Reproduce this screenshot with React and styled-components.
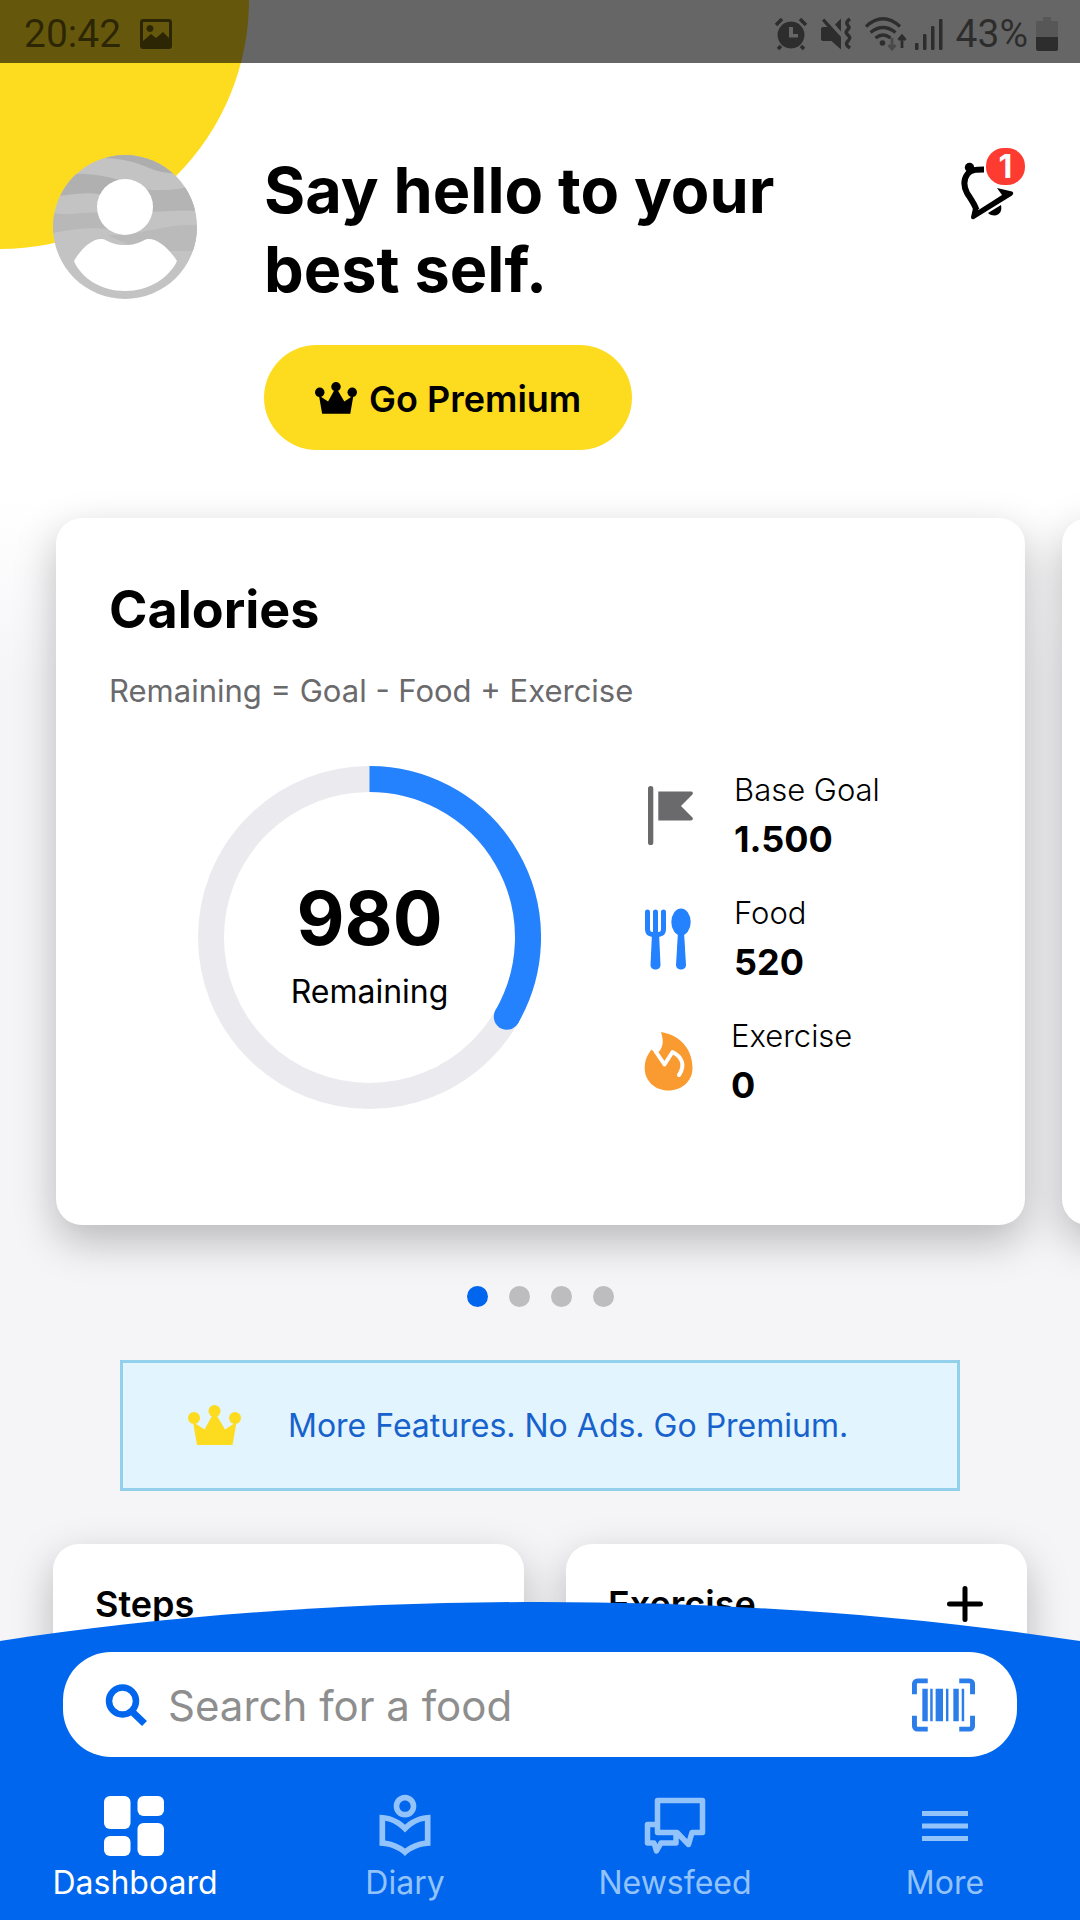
import React from "react";
import styled, { createGlobalStyle } from "styled-components";
import { MdOutlineLocalLibrary } from "react-icons/md";

const GlobalStyle = createGlobalStyle`
  *, *::before, *::after { box-sizing: border-box; }
  body { margin: 0; background: #f5f5f8; font-family: Inter, "Liberation Sans", sans-serif; color: #000; }
  h1, h2, p, ul, dl, dd { margin: 0; padding: 0; }
  button, input { font: inherit; color: inherit; border: 0; background: none; padding: 0; }
  button { cursor: pointer; }
  svg { display: block; flex: none; }
`;

const Page = styled.div`
  position: relative;
  min-height: 100vh;
  overflow: hidden;
  background: linear-gradient(#fff 0, #fff 500px, #f5f5f8 680px);
`;

const Sun = styled.div`
  position: absolute;
  top: -249px;
  left: -249px;
  width: 498px;
  height: 498px;
  border-radius: 50%;
  background: #fddb1f;
`;

const StatusBar = styled.div`
  position: relative;
  display: flex;
  align-items: center;
  height: 63px;
  padding: 4px 22px 0 24px;
  background: rgba(0, 0, 0, 0.6);
  color: rgba(0, 0, 0, 0.56);
  font: 400 39px/48px Roboto, sans-serif;
`;

const Clock = styled.time`
  margin-right: 19px;
`;

const StatusIcons = styled.div`
  display: flex;
  align-items: center;
  gap: 8px;
  margin-left: auto;
`;

const GlyphGroup = styled.div`
  display: flex;
  align-items: center;
  gap: 12px;
`;

const Header = styled.header`
  position: relative;
  display: flex;
  align-items: flex-start;
  padding: 85px 52px 0 53px;
`;

const Avatar = styled.button`
  margin-top: 7px;
  width: 144px;
  height: 144px;
  flex: none;
`;

const Greeting = styled.div`
  flex: 1;
  margin-left: 67px;
  padding-top: 3px;
`;

const Title = styled.h1`
  max-width: 560px;
  font-size: 63px;
  line-height: 79px;
  font-weight: 700;
`;

const PremiumButton = styled.button`
  display: flex;
  align-items: center;
  justify-content: center;
  gap: 12px;
  height: 105px;
  margin-top: 36px;
  padding: 2px 51px 0;
  border-radius: 53px;
  background: #fddb1f;
  font-size: 36px;
  line-height: 44px;
  font-weight: 600;
`;

const BellButton = styled.button`
  position: relative;
  display: flex;
  width: 70px;
  height: 74px;
  padding: 12px 0 0;
`;

const Badge = styled.span`
  position: absolute;
  top: 0;
  right: 3px;
  width: 39px;
  height: 37px;
  border-radius: 18px;
  background: #fe3b30;
  color: #fff;
  font-size: 32px;
  line-height: 38px;
  font-weight: 700;
  text-align: center;
`;

const Carousel = styled.section`
  position: relative;
  display: flex;
  gap: 37px;
  margin-top: 68px;
  padding: 0 0 0 56px;
`;

const Card = styled.article`
  background: #fff;
  border-radius: 26px;
  box-shadow: 0 16px 42px rgba(0, 0, 0, 0.25);
`;

const CaloriesCard = styled(Card)`
  flex: 0 0 calc(100% - 55px);
  height: 707px;
  padding: 60px 53px;
`;

const NextCard = styled(Card)`
  flex: 0 0 100%;
`;

const CardTitle = styled.h2`
  font-size: 52px;
  line-height: 64px;
  font-weight: 700;
`;

const Formula = styled.p`
  margin-top: 29px;
  color: #6a6a6d;
  font-size: 31px;
  line-height: 40px;
  font-weight: 400;
`;

const Summary = styled.div`
  display: flex;
  margin-top: 55px;
  padding-left: 89px;
`;

const Ring = styled.div`
  position: relative;
  display: flex;
  flex-direction: column;
  align-items: center;
  justify-content: center;
  width: 343px;
  height: 343px;
  padding-top: 12px;
`;

const RingArt = styled.svg`
  position: absolute;
  inset: 0;
`;

const RingValue = styled.strong`
  font-size: 74px;
  line-height: 84px;
  font-weight: 700;
`;

const RingLabel = styled.span`
  font-size: 32px;
  line-height: 40px;
  margin-top: 12px;
`;

const Legend = styled.dl`
  display: flex;
  flex-direction: column;
  gap: 24px;
  margin-left: 103px;
`;

const LegendRow = styled.div`
  display: grid;
  grid-template-columns: auto 1fr;
  column-gap: 36px;
  align-items: center;
`;

const LegendIcon = styled.span`
  grid-row: 1 / 3;
`;

const LegendLabel = styled.dt`
  font-size: 31px;
  line-height: 47px;
  font-weight: 300;
`;

const LegendValue = styled.dd`
  font-size: 36px;
  line-height: 52px;
  font-weight: 700;
`;

const Dots = styled.div`
  position: relative;
  display: flex;
  justify-content: center;
  gap: 21px;
  margin-top: 61px;
`;

const Dot = styled.button`
  width: 21px;
  height: 21px;
  border-radius: 50%;
  background: ${(p) => (p.$active ? "#0066ee" : "#bdbdbf")};
`;

const Banner = styled.a`
  position: relative;
  display: flex;
  align-items: center;
  gap: 47px;
  height: 131px;
  margin: 53px 120px 0;
  padding: 0 65px;
  border: 3px solid #92d0ec;
  background: #e2f4fe;
  color: #1762cc;
  font-size: 32px;
  line-height: 40px;
  font-weight: 400;
  text-decoration: none;
`;

const Tiles = styled.section`
  position: relative;
  display: grid;
  grid-template-columns: 471fr 461fr;
  gap: 42px;
  margin-top: 53px;
  padding: 0 53px 40px;
`;

const Tile = styled(Card)`
  display: flex;
  align-items: flex-start;
  justify-content: space-between;
  min-height: 320px;
  padding: 38px 44px 38px 42px;
`;

const TileTitle = styled.h2`
  font-size: 36px;
  line-height: 44px;
  font-weight: 600;
`;

const PlusButton = styled.button`
  padding-top: 4px;
`;

const BottomBar = styled.footer`
  position: fixed;
  left: 0;
  right: 0;
  bottom: 0;
`;

const Hill = styled.svg`
  width: 100%;
  height: 40px;
`;

const BottomBody = styled.div`
  background: #0066ee;
  padding: 10px 0 17px;
`;

const Search = styled.form`
  display: flex;
  align-items: center;
  gap: 21px;
  height: 105px;
  margin: 0 63px;
  padding: 0 42px;
  border-radius: 48px;
  background: #fff;
`;

const SearchInput = styled.input`
  flex: 1;
  min-width: 0;
  height: 60px;
  padding-top: 2px;
  font-size: 42px;
  font-weight: 400;
  outline: 0;
  &::placeholder { color: #8e8e8e; opacity: 1; }
`;

const Nav = styled.nav`
  display: grid;
  grid-template-columns: repeat(4, 1fr);
  margin-top: 35px;
`;

const NavLink = styled.a`
  display: flex;
  flex-direction: column;
  align-items: center;
  color: ${(p) => (p.$active ? "#fff" : "#93c3fb")};
  font-size: 32px;
  line-height: 40px;
  font-weight: 400;
  text-decoration: none;
`;

const NavIcon = styled.span`
  display: flex;
  align-items: center;
  justify-content: center;
  height: 68px;
  margin-bottom: 3px;
`;

function Crown({ width, color }) {
  return (
    <svg width={width} viewBox="0 0 53 42" fill={color} aria-hidden="true">
      <circle cx="6" cy="13" r="6" />
      <circle cx="26.500" cy="6" r="6" />
      <circle cx="47" cy="13" r="6" />
      <path d="M5 17l4 23h35.500l4-23-11.500 7.500L28.500 10h-4L16.500 24.500z" />
    </svg>
  );
}

function Alarm() {
  return (
    <svg width="34" height="34" viewBox="0 0 34 34" fill="none" stroke="currentColor" aria-hidden="true">
      <path fillRule="evenodd" fill="currentColor" stroke="none" d="M17 4.500a13.500 13.500 0 1 0 .010 0zM15 10h4v7h5v3.500h-9z" />
      <path d="M2 8l6-6M32 8l-6-6M7 29l-3 3M27 29l3 3" strokeWidth="3.500" />
    </svg>
  );
}

function Muted() {
  return (
    <svg width="33" height="34" viewBox="0 0 33 34" fill="none" stroke="currentColor" aria-hidden="true">
      <path fill="currentColor" stroke="none" d="M4.300 1.500L21 20v12.500l-9.500-8.500H3a2 2 0 0 1-2-2V12a2 2 0 0 1 2-2h4.500L2 3.800zM21 1.500v13l-6-7z" />
      <path d="M30 2c-6 4-2 6-1 8s-5 4-2 7 4 4 1 7-1 5 2 7" strokeWidth="3.500" />
    </svg>
  );
}

function Wifi() {
  return (
    <svg width="42" height="34" viewBox="0 0 42 34" fill="none" stroke="currentColor" aria-hidden="true">
      <path d="M1 9.500Q18-6 35 9.500M5.500 15.500q12.500-10 25 0M10.500 21q7.500-6 15 0" strokeWidth="3.300" />
      <circle cx="17.500" cy="26" r="2.800" fill="currentColor" stroke="none" />
      <path d="M37 31V20M33.500 23l3.500-4 3.500 4" strokeWidth="2.800" />
      <path d="M27 21v10M23.500 28l3.500 4 3.500-4" strokeWidth="2.800" opacity="0.500" />
    </svg>
  );
}

function Signal() {
  return (
    <svg width="33" height="32" viewBox="0 0 33 32" fill="currentColor" aria-hidden="true">
      <rect x="0" y="25" width="3.500" height="7" rx="1" />
      <rect x="8" y="16" width="3.500" height="16" rx="1" />
      <rect x="16" y="8" width="3.500" height="24" rx="1" />
      <rect x="24" y="1" width="3.500" height="31" rx="1" />
    </svg>
  );
}

function Battery() {
  return (
    <svg width="22" height="34" viewBox="0 0 22 34" fill="currentColor" aria-hidden="true">
      <path opacity="0.250" d="M7 0h8v4h7v16H0V4h7z" />
      <path d="M0 20h22v12a2 2 0 0 1-2 2H2a2 2 0 0 1-2-2z" />
    </svg>
  );
}

function Picture() {
  return (
    <svg width="32" height="30" viewBox="0 0 32 30" aria-hidden="true">
      <path
        fill="currentColor"
        fillRule="evenodd"
        d="M3 0h26a3 3 0 0 1 3 3v24a3 3 0 0 1-3 3H3a3 3 0 0 1-3-3V3a3 3 0 0 1 3-3zM3 3v19l8-7 5 4 7-6 6 6V3zM10 6a3.500 3.500 0 1 1-.010 0z"
      />
    </svg>
  );
}

function AvatarArt() {
  return (
    <svg width="144" height="144" viewBox="0 0 144 144" aria-hidden="true">
      <defs>
        <clipPath id="disc"><circle cx="72" cy="72" r="72" /></clipPath>
      </defs>
      <g clipPath="url(#disc)">
        <path fill="#c3c3c3" d="M0 0h144v144H0z" />
        <path fill="#adadad" d="M48 0h96v18c-22 2-38 0-50-6C80 6 64 3 48 3z" />
        <path fill="#b0b0b0" d="M0 20c30-3 50 0 66 5L50 40C34 36 16 40 0 42z" />
        <path fill="#b4b4b4" d="M90 34c20 3 38 0 54-4v26c-20-2-34 2-54 0z" />
        <path fill="#b8b8b8" d="M0 58c20 3 30-2 50 0l6 16C34 72 20 74 0 78z" />
        <path fill="#bababa" d="M54 80c30 2 60-12 90-10v26H90z" />
      </g>
      <circle cx="72" cy="52" r="28" fill="#fff" />
      <path
        fill="#fff"
        d="M21 106C29 92 40 84 48 84c7 0 8 6 24 6s17-6 24-6c8 0 19 8 28 22-8 17-28 30-52 30s-44-13-51-30z"
      />
    </svg>
  );
}

function Bell() {
  return (
    <svg width="60" height="62" viewBox="0 0 60 62" aria-hidden="true">
      <circle cx="11.500" cy="7.500" r="4.700" />
      <path fill="none" stroke="#000" strokeWidth="6" d="M26 9.500C18 9.500 13 9.500 9.500 14 5 20 6 27 9 33c3 5 7 10 9.500 17" />
      <path d="M13 57l3-13 4.500 6L44 35l-5-7 15 3.500q2.500 1.500 0 4L16 59q-3 1-3-2z" />
      <path d="M30 53l13-8c1 5-.500 8-3 9.500s-6.500 1.500-10-1.500z" />
    </svg>
  );
}

function Flag() {
  return (
    <svg width="54" height="62" viewBox="0 0 54 62" fill="#6a6a6d" aria-hidden="true">
      <rect x="4" y="1" width="5.300" height="59" rx="2.600" />
      <path d="M14.300 6.500H47c2 0 2.500 2 1.200 3.200L37 21l11.200 11.300c1.300 1.200.800 3.200-1.200 3.200H14.300z" />
    </svg>
  );
}

function Cutlery() {
  return (
    <svg width="54" height="62" viewBox="0 0 54 62" fill="#2582fe" aria-hidden="true">
      <path
        fill="none"
        stroke="#2582fe"
        strokeWidth="5"
        strokeLinecap="round"
        d="M3.500 4v17c0 5 3 5.500 8 5.500s8-.500 8-5.500V4M11.500 4v22"
      />
      <path d="M8 25h7l1.500 32c0 6-10 6-10 0z" />
      <ellipse cx="37" cy="14" rx="9.700" ry="13.500" />
      <path d="M34 24h6l2 33c0 6-10 6-10 0z" />
    </svg>
  );
}

function Flame() {
  return (
    <svg width="51" height="62" viewBox="0 0 51 62" aria-hidden="true">
      <path
        fill="#f99b31"
        d="M17 1C36 4 48.500 18 48.500 37c0 13-10.500 22.500-24 22.500S.700 50 .700 37c0-7 2.300-13 7-18.500l4.300 5 4-4C20 13 19 8 17 1z"
      />
      <path d="M12 21l8.500 12.500L28.500 21c8 4 14 12 6.500 23" fill="none" stroke="#fff" strokeWidth="4" strokeLinecap="round" strokeLinejoin="round" />
    </svg>
  );
}

function Plus() {
  return (
    <svg width="36" height="36" viewBox="0 0 36 36" stroke="#000" strokeWidth="5" strokeLinecap="round" aria-hidden="true">
      <path d="M18 2.500v31M2.500 18h31" />
    </svg>
  );
}

function Magnifier() {
  return (
    <svg width="42" height="42" viewBox="0 0 42 42" fill="none" stroke="#0066ee" aria-hidden="true">
      <circle cx="17.500" cy="17" r="13.500" strokeWidth="6.500" />
      <path d="M27.500 28l12 11.500" strokeWidth="7" />
    </svg>
  );
}

function Barcode() {
  return (
    <svg width="63" height="54" viewBox="0 0 64 54" fill="#2b7de9" aria-hidden="true">
      <path
        fill="none"
        stroke="#2b7de9"
        strokeWidth="5"
        d="M2.500 16V5.500a3 3 0 0 1 3-3H16M48 2.500h10.500a3 3 0 0 1 3 3V16M61.500 38v10.500a3 3 0 0 1-3 3H48M16 51.500H5.500a3 3 0 0 1-3-3V38"
      />
      <path d="M10.500 10.500H16v33h-5.500zM18.500 10.500h2.500v33h-2.500zM24 10.500h7.500v33H24zM34.500 10.500H37v33h-2.500zM42 10.500h5.500v33H42zM50.500 10.500H53v33h-2.500z" />
    </svg>
  );
}

function DashboardIcon() {
  return (
    <svg width="62" height="60" viewBox="0 0 62 60" fill="currentColor" aria-hidden="true">
      <rect width="26.500" height="33" rx="6" />
      <rect x="33.500" width="26.500" height="20" rx="6" />
      <rect y="40" width="26.500" height="20" rx="6" />
      <rect x="33.500" y="27" width="26.500" height="33" rx="6" />
    </svg>
  );
}

function NewsIcon() {
  return (
    <svg width="62" height="58" viewBox="0 0 62 58" fill="none" stroke="currentColor" strokeWidth="5.500" strokeLinejoin="round" aria-hidden="true">
      <path d="M33 35.500H13.500V3.500h45v32H48L44.500 47.500z" />
      <path d="M12 27.500H3.500V46H10l2.500 8 4.500-8h15V36" />
    </svg>
  );
}

function MenuIcon() {
  return (
    <svg width="46" height="32" viewBox="0 0 46 32" fill="currentColor" aria-hidden="true">
      <path d="M0 1h46v5H0zM0 13.500h46v5H0zM0 26h46v5H0z" />
    </svg>
  );
}

const legend = [
  { label: "Base Goal", value: "1.500", icon: <Flag /> },
  { label: "Food", value: "520", icon: <Cutlery /> },
  { label: "Exercise", value: "0", icon: <Flame /> },
];

const tabs = [
  { label: "Dashboard", icon: <DashboardIcon />, active: true },
  { label: "Diary", icon: <MdOutlineLocalLibrary size={68} /> },
  { label: "Newsfeed", icon: <NewsIcon /> },
  { label: "More", icon: <MenuIcon /> },
];

export default function App() {
  return (
    <Page>
      <GlobalStyle />
      <Sun />
      <StatusBar>
        <Clock>20:42</Clock>
        <Picture />
        <StatusIcons>
          <GlyphGroup>
            <Alarm />
            <Muted />
            <Wifi />
          </GlyphGroup>
          <Signal />
          <span>43%</span>
          <Battery />
        </StatusIcons>
      </StatusBar>

      <Header>
        <Avatar aria-label="Profile"><AvatarArt /></Avatar>
        <Greeting>
          <Title>Say hello to your best self.</Title>
          <PremiumButton><Crown width={42} color="#000" />Go Premium</PremiumButton>
        </Greeting>
        <BellButton aria-label="Notifications"><Bell /><Badge>1</Badge></BellButton>
      </Header>

      <main>
        <Carousel>
          <CaloriesCard>
            <CardTitle>Calories</CardTitle>
            <Formula>Remaining = Goal - Food + Exercise</Formula>
            <Summary>
              <Ring>
                <RingArt width="343" height="343" viewBox="0 0 343 343" fill="none" strokeWidth="26" aria-hidden="true">
                  <circle cx="171.500" cy="171.500" r="158.500" stroke="#ebebef" />
                  <path d="M171.500 13A158.500 158.500 0 0 1 308.800 250.700" stroke="#2582fe" />
                  <circle cx="308.800" cy="250.700" r="13" fill="#2582fe" stroke="none" />
                </RingArt>
                <RingValue>980</RingValue>
                <RingLabel>Remaining</RingLabel>
              </Ring>
              <Legend>
                {legend.map((row) => (
                  <LegendRow key={row.label}>
                    <LegendIcon>{row.icon}</LegendIcon>
                    <LegendLabel>{row.label}</LegendLabel>
                    <LegendValue>{row.value}</LegendValue>
                  </LegendRow>
                ))}
              </Legend>
            </Summary>
          </CaloriesCard>
          <NextCard />
        </Carousel>

        <Dots>
          {[0, 1, 2, 3].map((i) => (
            <Dot key={i} $active={i === 0} aria-label={`Card ${i + 1}`} />
          ))}
        </Dots>

        <Banner href="#premium">
          <Crown width={53} color="#fddb1f" />
          More Features. No Ads. Go Premium.
        </Banner>

        <Tiles>
          <Tile><TileTitle>Steps</TileTitle></Tile>
          <Tile>
            <TileTitle>Exercise</TileTitle>
            <PlusButton aria-label="Add exercise"><Plus /></PlusButton>
          </Tile>
        </Tiles>
      </main>

      <BottomBar>
        <Hill viewBox="0 0 1080 40" preserveAspectRatio="none" aria-hidden="true">
          <path fill="#0066ee" d="M0 41V39C340-13 740-13 1080 39v2z" />
        </Hill>
        <BottomBody>
          <Search>
            <Magnifier />
            <SearchInput type="text" placeholder="Search for a food" aria-label="Search for a food" />
            <button type="button" aria-label="Scan barcode"><Barcode /></button>
          </Search>
          <Nav>
            {tabs.map((tab) => (
              <NavLink key={tab.label} href={`#${tab.label.toLowerCase()}`} $active={tab.active}>
                <NavIcon>{tab.icon}</NavIcon>
                {tab.label}
              </NavLink>
            ))}
          </Nav>
        </BottomBody>
      </BottomBar>
    </Page>
  );
}
